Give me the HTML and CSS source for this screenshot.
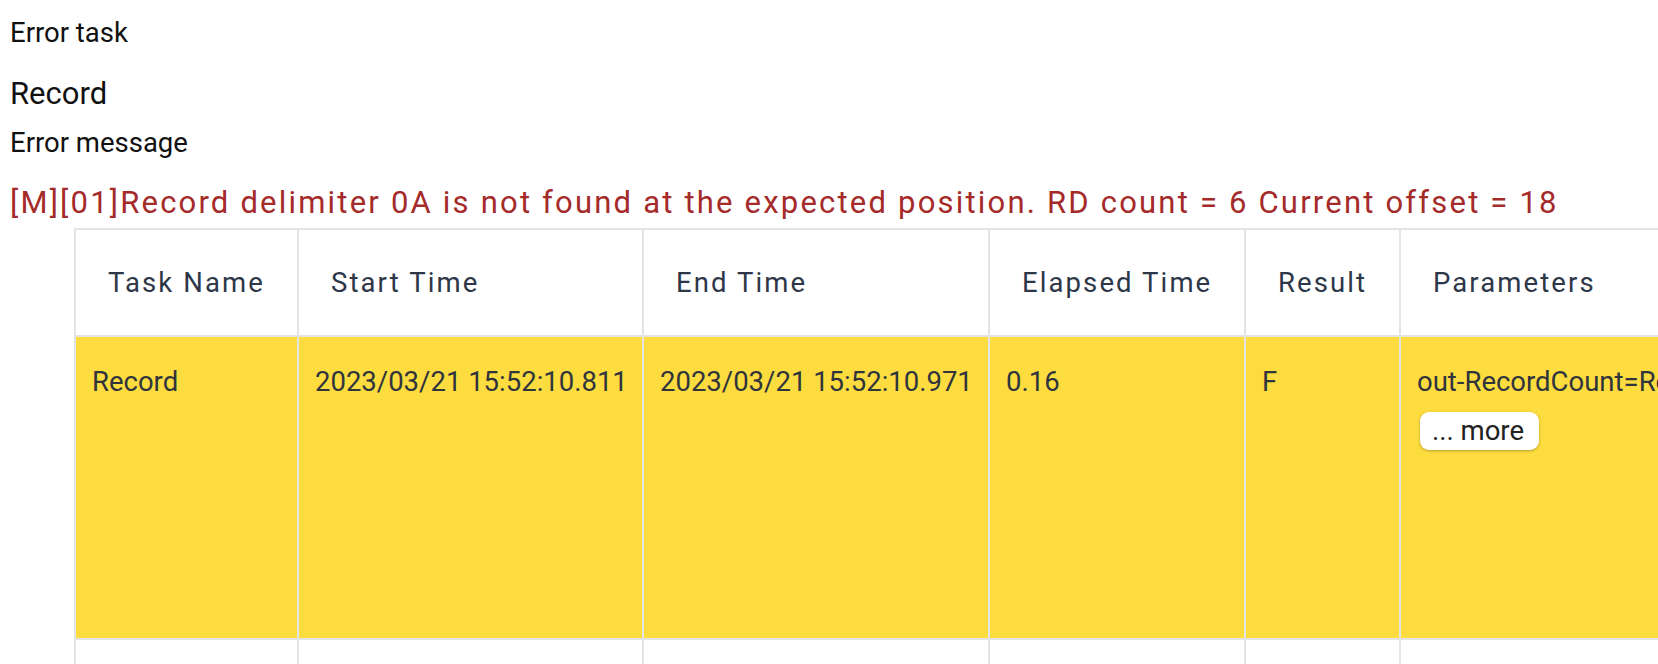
FILE: index.html
```html
<!DOCTYPE html>
<html lang="en">
<head>
<meta charset="utf-8">
<title>Error task</title>
<link rel="stylesheet" href="styles.css">
</head>
<body>
<div class="page">
  <div class="label first">Error task</div>
  <div class="task-name">Record</div>
  <div class="label">Error message</div>
  <div class="error-text">[M][01]Record delimiter 0A is not found at the expected position. RD count = 6 Current offset = 18</div>
  <div class="table-wrap">
    <table class="tasks">
      <thead>
        <tr>
          <th class="c1">Task Name</th>
          <th class="c2">Start Time</th>
          <th class="c3">End Time</th>
          <th class="c4">Elapsed Time</th>
          <th class="c5">Result</th>
          <th class="c6">Parameters</th>
        </tr>
      </thead>
      <tbody>
        <tr class="row-error">
          <td>Record</td>
          <td>2023/03/21 15:52:10.811</td>
          <td>2023/03/21 15:52:10.971</td>
          <td>0.16</td>
          <td>F</td>
          <td>
            <div class="param-text">out-RecordCount=RecordCount</div>
            <button class="more-btn">... more</button>
          </td>
        </tr>
        <tr class="row-next">
          <td></td><td></td><td></td><td></td><td></td><td></td>
        </tr>
      </tbody>
    </table>
  </div>
</div>
</body>
</html>
```

FILE: styles.css
```css
html, body {
  margin: 0;
  padding: 0;
  background: #ffffff;
  overflow: hidden;
}

body {
  font-family: Roboto, "Liberation Sans", sans-serif;
  color: #111111;
}

.page {
  padding: 4px 0 0 10px;
}

.label {
  font-size: 27.5px;
  line-height: 40px;
  margin-top: 5px;
}

.label.first {
  margin-top: 9px;
}

.task-name {
  font-size: 31px;
  line-height: 48px;
  margin-top: 17px;
}

.error-text {
  font-size: 31px;
  line-height: 40px;
  margin-top: 20px;
  letter-spacing: 2.2px;
  color: #a52a2a;
  white-space: nowrap;
}

.table-wrap {
  margin: 5px 0 0 64px;
  overflow: hidden;
}

.tasks {
  border-collapse: separate;
  border-spacing: 0;
  border-top: 2px solid #e4e4e7;
  border-left: 2px solid #e4e4e7;
  table-layout: fixed;
  width: 1900px;
}

.tasks th,
.tasks td {
  box-sizing: border-box;
  border-right: 2px solid #e4e4e7;
  border-bottom: 2px solid #e4e4e7;
  text-align: left;
}

.tasks th {
  height: 107px;
  padding: 0 0 0 32px;
  font-weight: 400;
  font-size: 27.5px;
  letter-spacing: 2.1px;
  color: #2d3748;
  vertical-align: middle;
}

.c1 { width: 223px; }
.c2 { width: 345px; }
.c3 { width: 346px; }
.c4 { width: 256px; }
.c5 { width: 155px; }
.c6 { width: 575px; }

.tasks td {
  padding: 24px 16px;
  font-size: 27.5px;
  line-height: 42px;
  color: #30343c;
  vertical-align: top;
  white-space: nowrap;
}

.row-error td {
  height: 303px;
  background: #fddc3f;
}

.row-next td {
  height: 100px;
  background: #ffffff;
}

.more-btn {
  display: block;
  margin: 9px 0 0 3px;
  padding: 4px 15px 4px 12px;
  font-family: Roboto, "Liberation Sans", sans-serif;
  font-size: 27.5px;
  line-height: 30px;
  color: #222222;
  background: #ffffff;
  border: none;
  border-radius: 9px;
  box-shadow: 0 1px 3px rgba(0, 0, 0, 0.28);
}
```
